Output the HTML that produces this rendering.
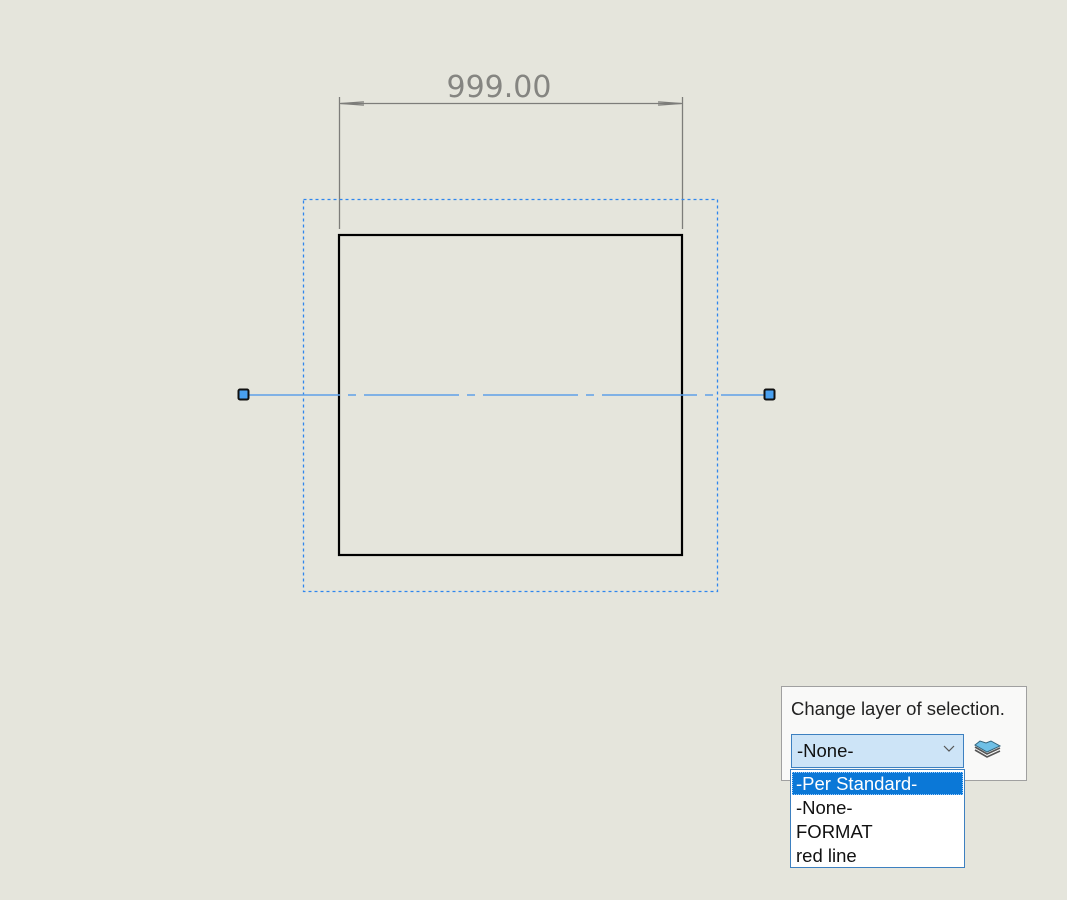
<!DOCTYPE html>
<html><head><style>
body{margin:0;width:1067px;height:900px;background:#e5e5dc;position:relative;overflow:hidden;font-family:"Liberation Sans",sans-serif}
.a{position:absolute}
</style></head><body>
<svg class="a" style="left:0;top:0" width="1067" height="900">
<text x="499" y="97" font-size="30" fill="#858581" text-anchor="middle" font-family="DejaVu Sans, Liberation Sans, sans-serif">999.00</text>
<g stroke="#7d7d7a" stroke-width="1.3" fill="none">
<line x1="339.5" y1="97" x2="339.5" y2="229"/>
<line x1="682.5" y1="97" x2="682.5" y2="229"/>
<line x1="340" y1="103.5" x2="682" y2="103.5"/>
<path d="M341 103.5 L362 102 M341 103.5 L362 105 M363 101 v5"/>
<path d="M681 103.5 L660 102 M681 103.5 L660 105 M659 101 v5"/>
</g>
<rect x="303.5" y="199.5" width="414" height="392" fill="none" stroke="#2f86ee" stroke-width="1.3" stroke-dasharray="3,3"/>
<rect x="339" y="235" width="343" height="320" fill="none" stroke="#000" stroke-width="2.2"/>
<line x1="245" y1="395" x2="768" y2="395" stroke="#5ea0e8" stroke-width="1.6" stroke-dasharray="95,8,8,8"/>
<rect x="238.5" y="389.5" width="10" height="10" rx="1.5" fill="#49a0f0" stroke="#111" stroke-width="2"/>
<rect x="764.5" y="389.5" width="10" height="10" rx="1.5" fill="#49a0f0" stroke="#111" stroke-width="2"/>
</svg>
<div class="a" style="left:781px;top:686px;width:244px;height:93px;background:#f9f9f8;border:1px solid #a0a0a0"></div>
<div class="a" style="left:791px;top:698px;font-size:18.5px;color:#222">Change layer of selection.</div>
<div class="a" style="left:791px;top:734px;width:171px;height:32px;background:#cde4f7;border:1px solid #3d80c0"></div>
<div class="a" style="left:797px;top:740px;font-size:18.5px;color:#111">-None-</div>
<svg class="a" style="left:942px;top:744px" width="14" height="10"><path d="M2 2 L7 7 L12 2" fill="none" stroke="#555" stroke-width="1.2"/></svg>
<svg class="a" style="left:972px;top:736px" width="32" height="26"><path d="M3 9 L8 5 L14 7 L19 5 L28 10 L15 16 Z" fill="#6fc0e6" stroke="#33647c"/><path d="M3 11 L15 18 L28 12 M3 14 L15 21 L28 15" fill="none" stroke="#555" stroke-width="1.6"/></svg>
<div class="a" style="left:790px;top:769px;width:173px;height:97px;background:#fff;border:1px solid #3d80c0"></div>
<div class="a" style="left:792px;top:772px;width:171px;height:23px;background:#0b78d7;border:1px dotted #9cf;box-sizing:border-box"></div>
<div class="a" style="left:796px;top:772px;font-size:18.5px;line-height:24px;color:#fff">-Per Standard-</div>
<div class="a" style="left:796px;top:796px;font-size:18.5px;line-height:24px;color:#111">-None-<br>FORMAT<br>red line</div>
</body></html>
